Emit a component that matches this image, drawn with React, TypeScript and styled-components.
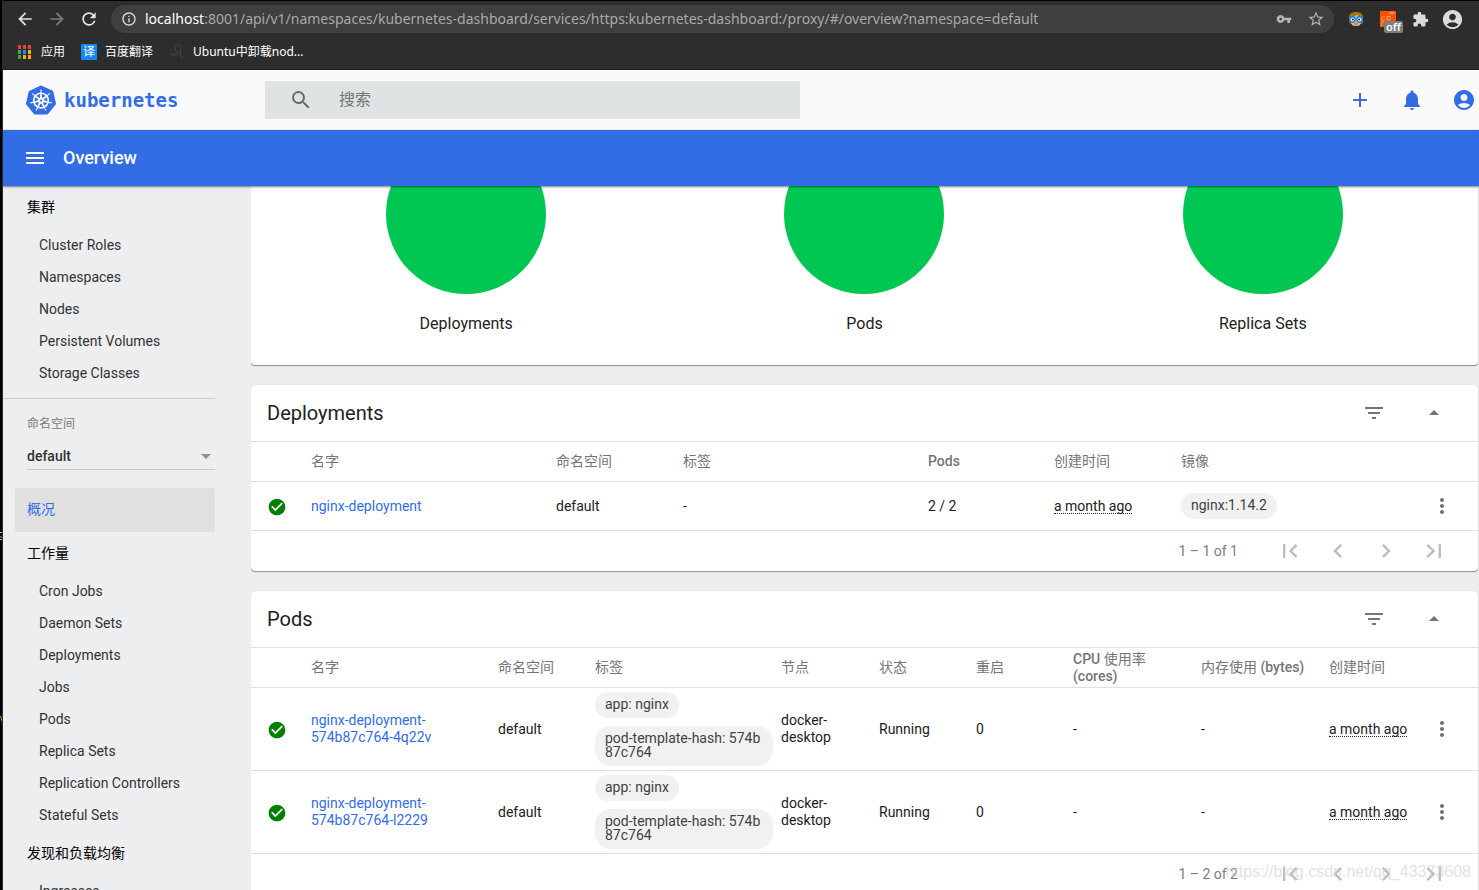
import React from 'react';
import styled, { createGlobalStyle } from 'styled-components';
import {
  MdAccountCircle, MdAdd, MdArrowBack, MdArrowDropUp, MdArrowForward, MdCheckCircle,
  MdChevronLeft, MdChevronRight, MdExtension, MdFilterList, MdFirstPage, MdInfoOutline,
  MdLastPage, MdMenu, MdMoreVert, MdNotifications, MdRefresh, MdSearch, MdStarBorder, MdVpnKey,
} from 'react-icons/md';
import { SiKubernetes } from 'react-icons/si';

const ui = `Roboto, 'Noto Sans CJK SC', sans-serif`;
const chromeFont = `'Noto Sans', 'Noto Sans CJK SC', sans-serif`;
const blue = '#326de6';

const GlobalStyle = createGlobalStyle`
  * { box-sizing: border-box; }
  body { margin: 0; font-family: ${ui}; font-size: 14px; color: #212121; background: #000; }
  button, input, select { font: inherit; color: inherit; }
  a { text-decoration: none; color: inherit; }
  svg { display: block; flex: none; }
`;

const Screen = styled.div`
  position: relative;
  display: flex;
  height: 100vh;
  overflow: hidden;
`;

const DesktopEdge = styled.div`
  width: 3px;
  flex: none;
  display: flex;
  flex-direction: column;
  justify-content: flex-end;
  gap: 176px;
  padding-bottom: 168px;
  background: #000;
  border-right: 1px solid #2d2d2d;
`;

const Browser = styled.div`
  flex: 1;
  min-width: 0;
  display: flex;
  flex-direction: column;
`;

/* Browser chrome */

const Chrome = styled.header`
  flex: none;
  height: 70px;
  background: #2d2d2d;
  border-top: 1px solid #000;
  border-bottom: 1px solid #1c1c1c;
  font-family: ${chromeFont};
  color: #fff;
`;

const NavRow = styled.div`
  display: flex;
  align-items: center;
  height: 36px;
  padding: 0 15px 0 12px;
`;

const NavButtons = styled.div`
  display: flex;
  gap: 12px;
  margin-right: 12px;
`;

const IconButton = styled.button<{ $size?: number; $color?: string }>`
  display: flex;
  align-items: center;
  justify-content: center;
  flex: none;
  width: ${p => p.$size ?? 24}px;
  height: ${p => p.$size ?? 24}px;
  padding: 0;
  border: 0;
  background: none;
  color: ${p => p.$color ?? 'inherit'};
  cursor: pointer;
`;

const Omnibox = styled.div`
  flex: 1;
  min-width: 0;
  display: flex;
  align-items: center;
  gap: 12px;
  height: 28px;
  padding: 0 8px 0 10px;
  border-radius: 14px;
  background: #3f3f3f;
  color: #dcdcdc;
`;

const Url = styled.div`
  flex: 1;
  min-width: 0;
  margin-left: -4px;
  overflow: hidden;
  white-space: nowrap;
  font-size: 14px;
  line-height: 20px;
  color: #a9a9a9;
  b { font-weight: 400; color: #fff; }
`;

const Extensions = styled.div`
  display: flex;
  align-items: center;
  gap: 12px;
  margin-left: 12px;
  color: #dcdcdc;
  button:nth-last-child(1) { margin-left: -2px; }
`;

const BadgedButton = styled(IconButton)`
  position: relative;
`;

const OffBadge = styled.span`
  position: absolute;
  left: 6px;
  top: 12px;
  padding: 0 2px;
  border-radius: 2px;
  background: #7b7f80;
  color: #fff;
  font-size: 11px;
  line-height: 12px;
  font-weight: 600;
`;

const Bookmarks = styled.nav`
  display: flex;
  align-items: center;
  height: 30px;
  padding-left: 14px;
  font-size: 12px;
  gap: 16px;
`;

const Bookmark = styled.a`
  display: flex;
  align-items: center;
  gap: 8px;
  line-height: 16px;
`;

const TranslateMark = styled.span`
  width: 16px;
  height: 16px;
  border-radius: 1px;
  background: #1388f5;
  text-align: center;
`;

/* Dashboard */

const TopBar = styled.header`
  flex: none;
  display: flex;
  align-items: center;
  height: 60px;
  padding-right: 3px;
  background: #fafafa;
  border-bottom: 1px solid #f0f0f0;
  color: ${blue};
`;

const Logo = styled.a`
  flex: none;
  display: flex;
  align-items: center;
  gap: 8px;
  width: 262px;
  padding-left: 23px;
  font: 700 19px 'DejaVu Sans Mono', monospace;
`;

const SearchBox = styled.label`
  flex: 511 1 0;
  display: flex;
  align-items: center;
  gap: 26px;
  height: 38px;
  padding-left: 24px;
  border-radius: 2px;
  background: #dfe3e4;
  color: #6b6b6b;
  input {
    flex: 1;
    min-width: 0;
    border: 0;
    outline: 0;
    padding: 0;
    background: none;
    font-size: 16px;
  }
  input::placeholder { color: #757575; opacity: 1; }
`;

const TopActions = styled.div`
  flex: 676 1 0;
  display: flex;
  justify-content: flex-end;
  gap: 28px;
`;

const TitleBar = styled.div`
  flex: none;
  position: relative;
  z-index: 1;
  display: flex;
  align-items: center;
  gap: 16px;
  height: 56px;
  padding-left: 20px;
  background: ${blue};
  color: #fff;
  box-shadow: 0 1px 2px rgba(0, 0, 0, 0.5);
  h1 { margin: 0; font-size: 18px; line-height: 24px; font-weight: 500; }
`;

const Body = styled.div`
  flex: 1;
  min-height: 0;
  display: flex;
  background: #edeef0;
`;

const Sidebar = styled.nav`
  flex: none;
  width: 248px;
  padding-right: 36px;
  overflow: hidden;
`;

const SidebarScroll = styled.div`
  margin-top: -1px;
`;

const Group = styled.section`
  h2 {
    margin: 0;
    padding-left: 24px;
    font-size: 14px;
    line-height: 44px;
    font-weight: 400;
    color: #000;
  }
  a { display: block; padding-left: 36px; line-height: 32px; color: #333; }
`;

const NamespacePicker = styled.div`
  margin-top: 9px;
  padding: 17px 0 18px 24px;
  border-top: 1px solid #cacbcc;
  label { display: block; font-size: 12px; line-height: 16px; color: #7b7b7b; }
`;

const SelectWrap = styled.div`
  display: flex;
  align-items: center;
  margin-top: 11px;
  border-bottom: 1px solid #c6c7c8;
  select {
    flex: 1;
    height: 26px;
    margin-right: -14px;
    padding: 0;
    border: 0;
    outline: 0;
    background: none;
    appearance: none;
    font-weight: 500;
    color: #333;
  }
  svg { margin-right: 4px; }
`;

const ActiveLink = styled.a`
  display: block;
  margin: 0 0 -1px 12px;
  padding: 0 0 2px 12px;
  border-radius: 2px;
  background: #e0e0e0;
  line-height: 42px;
  color: ${blue};
`;

const Main = styled.main`
  flex: 1;
  min-width: 0;
  padding-right: 1px;
  overflow: hidden;
`;

const MainScroll = styled.div`
  margin-top: -72px;
  display: flex;
  flex-direction: column;
  gap: 20px;
`;

const Card = styled.section`
  border-radius: 4px;
  background: #fff;
  box-shadow: 0 1px 1px rgba(0, 0, 0, 0.4), 0 0 1px rgba(0, 0, 0, 0.2);
`;

const Charts = styled(Card)`
  display: grid;
  grid-template-columns: repeat(3, 1fr);
  padding: 20px 16px 32px;
`;

const Chart = styled.figure`
  margin: 0;
  display: flex;
  flex-direction: column;
  align-items: center;
  gap: 20px;
  figcaption { font-size: 16px; line-height: 19px; }
`;

const CardHeader = styled.header`
  display: flex;
  align-items: center;
  gap: 20px;
  height: 56px;
  padding: 0 24px 0 16px;
  color: #757575;
  h2 { flex: 1; margin: 0; font-size: 20px; line-height: 24px; font-weight: 400; color: #212121; }
`;

const Table = styled.table`
  width: 100%;
  table-layout: fixed;
  border-collapse: separate;
  border-spacing: 0;
  line-height: 17px;
  th, td { padding: 0 8px 0 0; text-align: left; vertical-align: middle; }
  th { height: 41px; border-top: 1px solid #e0e0e0; border-bottom: 1px solid #e0e0e0; font-weight: 400; color: #757575; }
  th b { font-weight: 500; }
  td { height: 49px; padding-top: 4px; padding-bottom: 4px; border-bottom: 1px solid #e0e0e0; }
  th:first-child, td:first-child { padding-left: 16px; }
  td:first-child { padding-top: 6px; }
  td:last-child { padding-left: 12px; }
  td a { color: ${blue}; }
`;

const Age = styled.span`
  white-space: nowrap;
  border-bottom: 1px dotted #212121;
  display: inline-block;
  line-height: 13px;
`;

const Chips = styled.div`
  display: flex;
  flex-direction: column;
  align-items: flex-start;
  gap: 8px;
`;

const Chip = styled.span`
  padding: 5px 10px 7px;
  border-radius: 16px;
  background: #f1f1f1;
  line-height: 14px;
  color: #424242;
  word-break: break-all;
`;

const Paginator = styled.footer`
  display: flex;
  align-items: center;
  justify-content: flex-end;
  height: 40px;
  padding-right: 12px;
  color: #7d7d7d;
  span { margin-right: 40px; }
`;

const PageButtons = styled.div`
  display: flex;
  gap: 24px;
  margin-right: 20px;
`;

const Watermark = styled.div`
  position: absolute;
  right: 8px;
  bottom: 8px;
  font: 16px/20px 'Liberation Sans', sans-serif;
  color: rgba(205, 205, 205, 0.6);
  pointer-events: none;
`;

const AppsGrid = () => (
  <svg width="16" height="16" viewBox="0 0 16 16">
    {['#ea4335', '#ea4335', '#ea4335', '#34a853', '#1a8cff', '#fbaf00', '#34a853', '#fbaf00', '#fbaf00'].map((c, i) => (
      <rect key={i} x={1 + (i % 3) * 5} y={1 + Math.floor(i / 3) * 5} width="3" height="4" fill={c} />
    ))}
  </svg>
);

const Columns = ({ widths }: { widths: number[] }) => (
  <colgroup>{widths.map((w, i) => <col key={i} width={w} />)}</colgroup>
);

const StatusOk = () => <MdCheckCircle size={20} color="#008000" aria-label="Healthy" />;

const RowMenu = () => (
  <IconButton aria-label="Actions" $color="#6f6f6f"><MdMoreVert size={24} /></IconButton>
);

const ListCard = ({ title, range, children }: { title: string; range: string; children: React.ReactNode }) => (
  <Card>
    <CardHeader>
      <h2>{title}</h2>
      <IconButton $size={40} aria-label="Filter"><MdFilterList size={24} /></IconButton>
      <IconButton $size={40} aria-label="Collapse"><MdArrowDropUp size={24} /></IconButton>
    </CardHeader>
    {children}
    <Paginator>
      <span>{range}</span>
      <PageButtons>
        {[MdFirstPage, MdChevronLeft, MdChevronRight, MdLastPage].map((Icon, i) => (
          <IconButton key={i} $color="#bdbdbd" aria-label={['First page', 'Previous page', 'Next page', 'Last page'][i]}>
            <Icon size={28} />
          </IconButton>
        ))}
      </PageButtons>
    </Paginator>
  </Card>
);

const NavGroup = ({ title, items }: { title: string; items: string[] }) => (
  <Group>
    <h2>{title}</h2>
    {items.map(item => <a href="#" key={item}>{item}</a>)}
  </Group>
);

export default function App() {
  return (
    <Screen>
      <GlobalStyle />
      <DesktopEdge aria-hidden="true">
        <svg width="2" height="8" viewBox="0 0 2 8"><path d="M0 .5H2M0 4.5L2 5.5M0 7.5H2" stroke="#b8b8b8" /></svg>
        <svg width="2" height="6" viewBox="0 0 2 6"><path d="M.5 0L2 5" stroke="#c9a13a" /></svg>
      </DesktopEdge>
      <Browser>
        <Chrome>
          <NavRow>
            <NavButtons>
              <IconButton $size={20} $color="#e4e4e4" aria-label="Back"><MdArrowBack size={20} /></IconButton>
              <IconButton $size={20} $color="#7d7d7d" aria-label="Forward"><MdArrowForward size={20} /></IconButton>
              <IconButton $size={20} $color="#e4e4e4" aria-label="Reload"><MdRefresh size={20} /></IconButton>
            </NavButtons>
            <Omnibox>
              <MdInfoOutline size={16} />
              <Url><b>localhost</b>:8001/api/v1/namespaces/kubernetes-dashboard/services/https:kubernetes-dashboard:/proxy/#/overview?namespace=default</Url>
              <IconButton $size={20} $color="#b4b4b4" aria-label="Passwords"><MdVpnKey size={16} /></IconButton>
              <IconButton $size={20} $color="#b4b4b4" aria-label="Bookmark this page"><MdStarBorder size={18} /></IconButton>
            </Omnibox>
            <Extensions>
              <IconButton $size={20} aria-label="Glasses extension">
                <svg width="16" height="16" viewBox="0 0 16 16">
                  <path d="M1 11V6C1 3 4 1 8 1s7 2 7 5v6l-2 1H3z" fill="#a8741a" />
                  <path d="M3 7l6-3 4 3v4c0 3-2 4-5 4s-5-1-5-4z" fill="#f2b48c" />
                  <circle cx="4.5" cy="8.5" r="2.7" fill="#fff" stroke="#1680d8" strokeWidth="1.4" />
                  <circle cx="11.5" cy="8.5" r="2.7" fill="#fff" stroke="#1680d8" strokeWidth="1.4" />
                  <circle cx="4.8" cy="8.5" r="1" fill="#123" />
                  <circle cx="11.2" cy="8.5" r="1" fill="#123" />
                  <path d="M6 13h4" stroke="#b4423a" />
                </svg>
              </IconButton>
              <BadgedButton $size={20} aria-label="Extension, off">
                <svg width="16" height="16" viewBox="0 0 16 16" fill="none" stroke="#ff9d6b">
                  <rect width="16" height="16" fill="#ff5000" stroke="none" />
                  <path d="M5 5.5H3L1.500 7v2h3.500M7 5.500h3V9H7zM10 3.500V1.500h4v2M12 1.500v2M1.500 15v-4h3" />
                </svg>
                <OffBadge>off</OffBadge>
              </BadgedButton>
              <IconButton $size={20} aria-label="Extensions"><MdExtension size={17} /></IconButton>
              <IconButton $size={24} aria-label="Profile"><MdAccountCircle size={23} /></IconButton>
            </Extensions>
          </NavRow>
          <Bookmarks>
            <Bookmark href="#"><AppsGrid />应用</Bookmark>
            <Bookmark href="#"><TranslateMark>译</TranslateMark>百度翻译</Bookmark>
            <Bookmark href="#">
              <svg width="16" height="16" viewBox="0 0 16 16" fill="none" stroke="#454142" strokeWidth="1.200">
                <path d="M2 9c1 3 5 3 8-1M10 8C5 8 5 1 9 1s3 6 2 9c0 2 1 3 3 4" />
              </svg>
              Ubuntu中卸载nod...
            </Bookmark>
          </Bookmarks>
        </Chrome>

        <TopBar>
          <Logo href="#"><SiKubernetes size={30} />kubernetes</Logo>
          <SearchBox>
            <MdSearch size={24} />
            <input type="search" placeholder="搜索" aria-label="搜索" />
          </SearchBox>
          <TopActions>
            <IconButton aria-label="Create"><MdAdd size={24} /></IconButton>
            <IconButton aria-label="Notifications"><MdNotifications size={24} /></IconButton>
            <IconButton aria-label="Account"><MdAccountCircle size={24} /></IconButton>
          </TopActions>
        </TopBar>
        <TitleBar>
          <IconButton aria-label="Menu"><MdMenu size={24} /></IconButton>
          <h1>Overview</h1>
        </TitleBar>

        <Body>
          <Sidebar>
            <SidebarScroll>
              <NavGroup title="集群" items={['Cluster Roles', 'Namespaces', 'Nodes', 'Persistent Volumes', 'Storage Classes']} />
              <NamespacePicker>
                <label htmlFor="namespace">命名空间</label>
                <SelectWrap>
                  <select id="namespace" defaultValue="default"><option>default</option></select>
                  <svg width="10" height="5" viewBox="0 0 10 5"><path d="M0 0h10L5 5z" fill="#8f8f90" /></svg>
                </SelectWrap>
              </NamespacePicker>
              <ActiveLink href="#">概况</ActiveLink>
              <NavGroup title="工作量" items={['Cron Jobs', 'Daemon Sets', 'Deployments', 'Jobs', 'Pods', 'Replica Sets', 'Replication Controllers', 'Stateful Sets']} />
              <NavGroup title="发现和负载均衡" items={['Ingresses']} />
            </SidebarScroll>
          </Sidebar>

          <Main>
            <MainScroll>
              <Charts>
                {['Deployments', 'Pods', 'Replica Sets'].map(name => (
                  <Chart key={name}>
                    <svg width="160" height="160" viewBox="0 0 160 160"><circle cx="80" cy="80" r="80" fill="#00c752" /></svg>
                    <figcaption>{name}</figcaption>
                  </Chart>
                ))}
              </Charts>

              <ListCard title="Deployments" range="1 – 1 of 1">
                <Table>
                  <Columns widths={[60, 245, 127, 245, 126, 127, 237, 60]} />
                  <thead>
                    <tr><th /><th>名字</th><th>命名空间</th><th>标签</th><th><b>Pods</b></th><th>创建时间</th><th>镜像</th><th /></tr>
                  </thead>
                  <tbody>
                    <tr>
                      <td><StatusOk /></td>
                      <td><a href="#">nginx-deployment</a></td>
                      <td>default</td>
                      <td>-</td>
                      <td>2 / 2</td>
                      <td><Age>a month ago</Age></td>
                      <td><Chips><Chip>nginx:1.14.2</Chip></Chips></td>
                      <td><RowMenu /></td>
                    </tr>
                  </tbody>
                </Table>
              </ListCard>

              <ListCard title="Pods" range="1 – 2 of 2">
                <Table>
                  <Columns widths={[60, 187, 97, 186, 98, 97, 97, 128, 128, 89, 60]} />
                  <thead>
                    <tr>
                      <th /><th>名字</th><th>命名空间</th><th>标签</th><th>节点</th><th>状态</th><th>重启</th>
                      <th><b>CPU</b> 使用率 <b>(cores)</b></th><th>内存使用 <b>(bytes)</b></th><th>创建时间</th><th />
                    </tr>
                  </thead>
                  <tbody>
                    {['nginx-deployment-574b87c764-4q22v', 'nginx-deployment-574b87c764-l2229'].map(pod => (
                      <tr key={pod}>
                        <td><StatusOk /></td>
                        <td><a href="#">{pod}</a></td>
                        <td>default</td>
                        <td><Chips><Chip>app: nginx</Chip><Chip>pod-template-hash: 574b87c764</Chip></Chips></td>
                        <td>docker-desktop</td>
                        <td>Running</td>
                        <td>0</td>
                        <td>-</td>
                        <td>-</td>
                        <td><Age>a month ago</Age></td>
                        <td><RowMenu /></td>
                      </tr>
                    ))}
                  </tbody>
                </Table>
              </ListCard>
            </MainScroll>
          </Main>
        </Body>
      </Browser>
      <Watermark>https://blog.csdn.net/qq_43373608</Watermark>
    </Screen>
  );
}
